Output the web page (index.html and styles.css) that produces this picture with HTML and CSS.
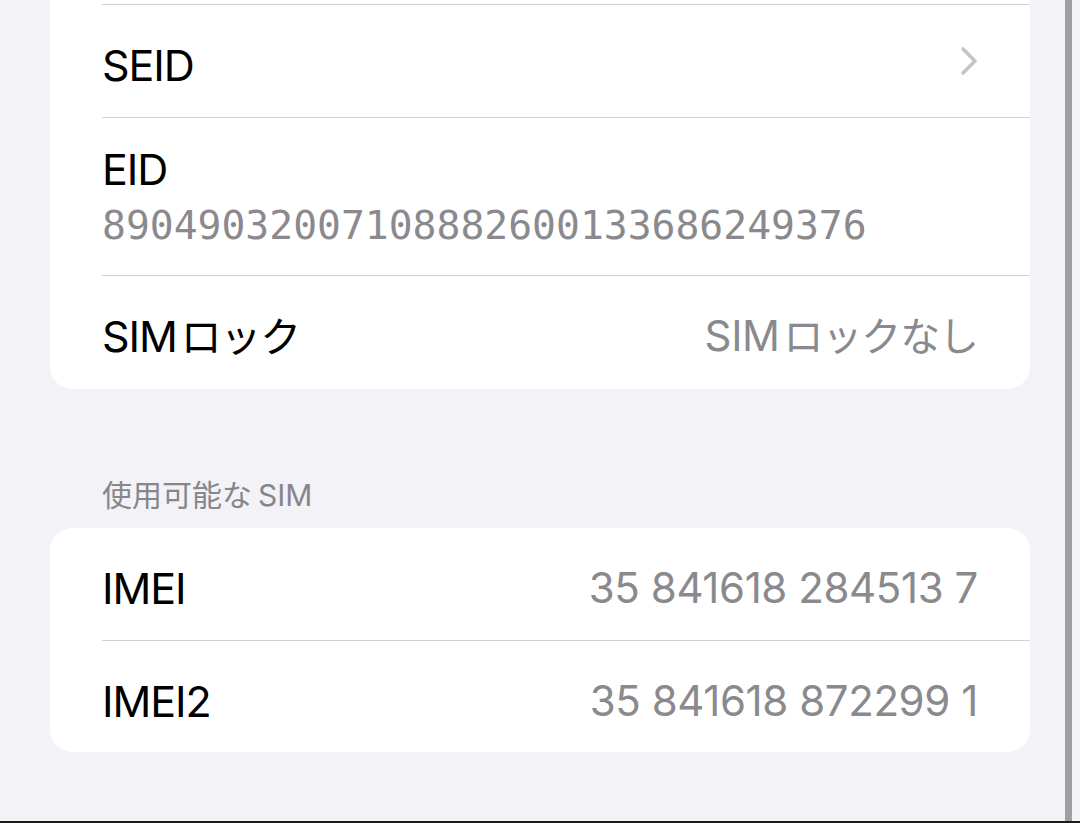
FILE: index.html
```html
<!DOCTYPE html>
<html lang="ja">
<head>
<meta charset="utf-8">
<title>情報</title>
<link rel="stylesheet" href="styles.css">
</head>
<body>
<div class="screen">
  <main class="content">
    <section class="group group-top">
      <div class="row">
        <span class="label">SEID</span>
        <svg class="chevron" width="18" height="30" viewBox="0 0 18 30" aria-hidden="true">
          <polyline points="3,3 15,15 3,27" fill="none" stroke="#c4c4c7" stroke-width="3.6" stroke-linecap="round" stroke-linejoin="round"/>
        </svg>
      </div>
      <div class="row row-stack">
        <span class="label">EID</span>
        <span class="mono">89049032007108882600133686249376</span>
      </div>
      <div class="row row-last">
        <span class="label"><span class="latin">SIM</span><span class="kana">ロック</span></span>
        <span class="value"><span class="latin">SIM</span><span class="kana">ロックなし</span></span>
      </div>
    </section>

    <h2 class="section-title">使用可能な<span class="latin-sm">SIM</span></h2>
    <section class="group">
      <div class="row row-first">
        <span class="label">IMEI</span>
        <span class="value">35 841618 284513 7</span>
      </div>
      <div class="row">
        <span class="label">IMEI2</span>
        <span class="value">35 841618 872299 1</span>
      </div>
    </section>
  </main>
  <div class="edge"></div>
  <div class="gutter"></div>
</div>
</body>
</html>
```

FILE: styles.css
```css
html, body {
  margin: 0;
  padding: 0;
}

body {
  width: 1080px;
  height: 823px;
  overflow: hidden;
  background: #f2f2f7;
  font-family: "Inter", "Noto Sans CJK JP", sans-serif;
  -webkit-font-smoothing: antialiased;
}

.screen {
  display: flex;
  height: 821px;
  border-bottom: 2px solid #1a1a1a;
}

.content {
  width: 980px;
  padding: 0 35px 0 50px;
  flex: none;
}

.edge {
  width: 7px;
  flex: none;
  background: #9e9ea3;
}

.gutter {
  flex: 1;
  background: #f4f4f8;
}

.group {
  background: #ffffff;
  border-radius: 22px;
  overflow: hidden;
}

.group-top {
  border-radius: 0 0 22px 22px;
  padding-top: 4px;
}

.row {
  margin-left: 52px;
  padding: 8px 52px 0 0;
  height: 112px;
  border-top: 1.5px solid #d1d1d6;
  display: flex;
  align-items: center;
  justify-content: space-between;
  box-sizing: border-box;
}

.group-top .row {
  height: 113px;
}

.group-top .row-last {
  height: 114px;
}

.row-first {
  border-top: none;
}

.group-top .row-stack {
  height: 158px;
  padding-top: 0;
  flex-direction: column;
  align-items: flex-start;
  justify-content: center;
  gap: 4px;
}

.label {
  font-size: 43px;
  line-height: 52px;
  color: #000000;
  letter-spacing: -1.1px;
}

.value {
  font-size: 42px;
  line-height: 52px;
  color: #8a8a8e;
  letter-spacing: -0.4px;
}

.latin {
  margin-right: 4px;
}

.kana {
  font-size: 0.95em;
  letter-spacing: -1px;
}

.mono {
  font-family: "DejaVu Sans Mono", "Liberation Mono", monospace;
  font-size: 39.7px;
  line-height: 52px;
  color: #8a8a8e;
}

.chevron {
  display: block;
  margin-top: -8px;
}

.section-title {
  margin: 88px 0 15px 52px;
  font-size: 30px;
  line-height: 36px;
  font-weight: 400;
  color: #86868b;
}

.latin-sm {
  margin-left: 6px;
}
```
